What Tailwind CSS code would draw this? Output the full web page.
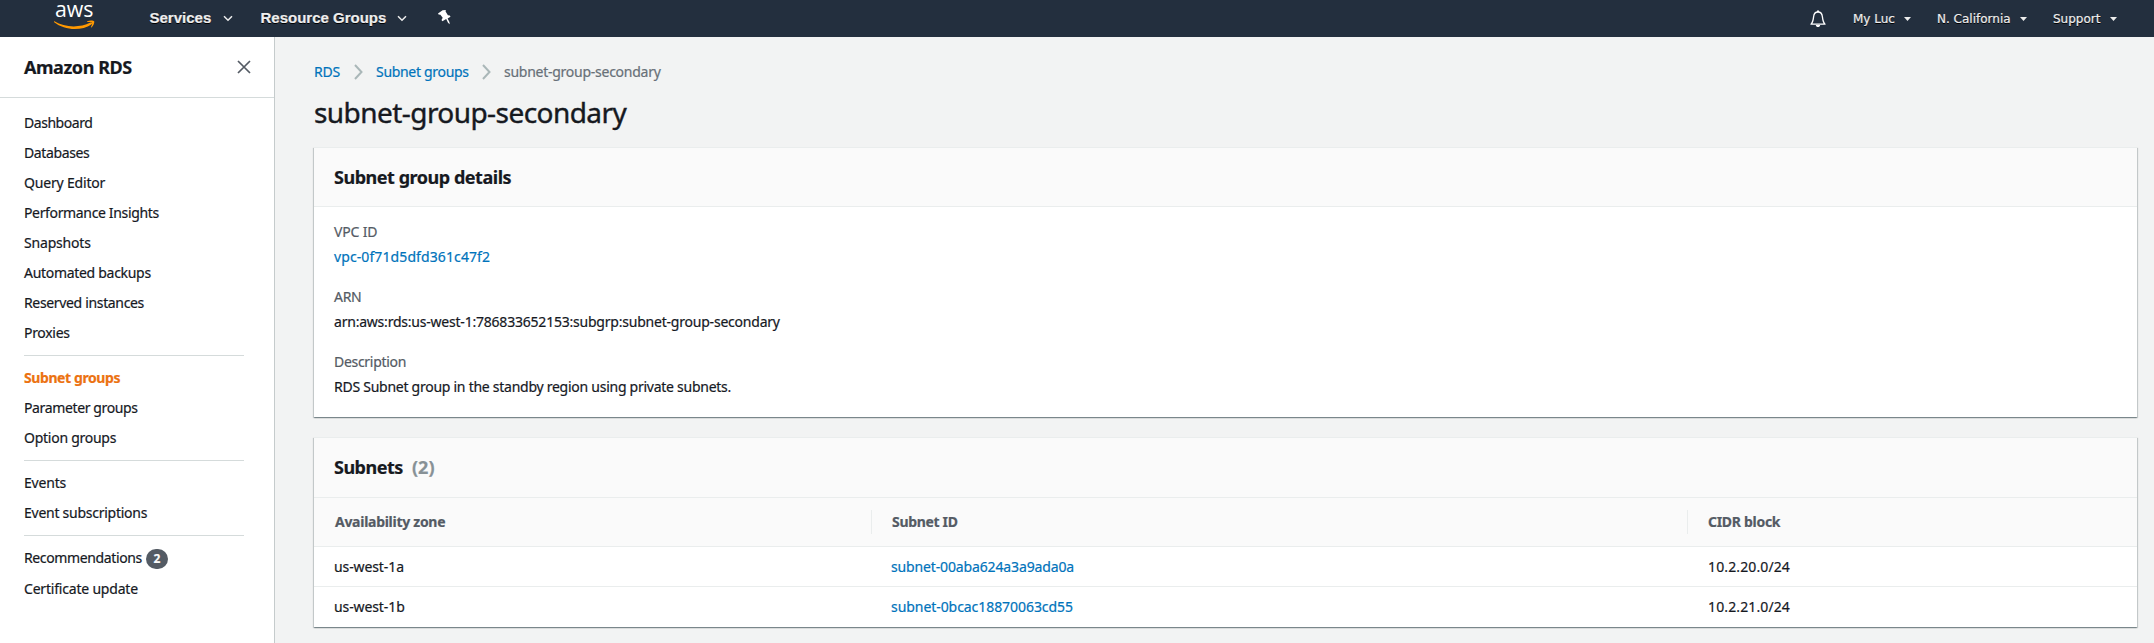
<!DOCTYPE html>
<html lang="en">
<head>
<meta charset="utf-8">
<title>Amazon RDS</title>
<script src="https://cdn.jsdelivr.net/npm/@tailwindcss/browser@4"></script>
</head>
<body class="flex h-[643px] w-[2154px] flex-col overflow-hidden bg-[#f2f3f3] font-['Noto_Sans',sans-serif] text-[14px] text-[#16191f] [-webkit-text-stroke:0.2px]">

<header class="flex h-[37px] shrink-0 items-center bg-[#232f3e] text-[#eeeeee]">
  <a class="ml-[54px] h-[37px] w-[42px]" aria-label="AWS">
    <svg class="block h-[37px] w-[42px]" viewBox="0 0 42 37">
      <text x="1" y="17" textLength="38.5" lengthAdjust="spacingAndGlyphs" font-family="Open Sans, sans-serif" font-size="21" font-weight="500" fill="#fff">aws</text>
      <path d="M.4 21.300c10.200 6.300 25 6.900 36 1.300 1.500-.6 2.400.8 1 1.800C27.500 31 10.500 30.500.2 22.200c-.5-.5-.2-1.100.2-.9z" fill="#ff9900"/>
      <path d="M33.200 21.200c2.400-1.200 6.400-1 7 .1.500 1.200-.8 4.600-2.700 6.100-.4.3-.7.100-.5-.4.500-1.200 1.500-3.600 1-4.300-.6-.8-3.200-.8-4.600-.8-.5 0-.6-.5-.2-.7z" fill="#ff9900"/>
    </svg>
  </a>
  <nav class="flex flex-1 items-center font-['Liberation_Sans',sans-serif] text-[15px] font-bold leading-[36px] [text-shadow:0_1px_0_#000]">
    <span class="-mt-px ml-[53.5px] w-[73px]">Services</span>
    <svg class="h-[7px] w-[10px]" viewBox="0 0 10 7"><path d="M1 1.200 5 5.200 9 1.200" fill="none" stroke="#eee" stroke-width="1.500"/></svg>
    <span class="-mt-px ml-[28px] w-[136.500px]">Resource Groups</span>
    <svg class="h-[7px] w-[10px]" viewBox="0 0 10 7"><path d="M1 1.200 5 5.200 9 1.200" fill="none" stroke="#eee" stroke-width="1.500"/></svg>
    <svg class="-mt-[3px] ml-[31px] h-[15px] w-[14px]" viewBox="0 0 14 15"><path d="M4.600.3 7.800 0 7.600 1.500l2.300 3.800 1.900.2.700 1.300-2.900 1.800 1.800 3.500.3 2.200-1.700-1.600-1.800-3.600-3.800 2.200-.9-1.200 1.200-2.300L2.400 4.700.6 4.600 0 3.400z" fill="#fff"/></svg>
  </nav>
  <div class="flex items-center pr-[37px] font-['DejaVu_Sans',sans-serif] text-[12px] leading-[37px] [text-shadow:0_1px_0_#000]">
    <svg class="mr-[27px] h-[18px] w-[16px]" viewBox="0 0 16 18"><path d="M1 14.200h14c-2-1.800-2.200-3.800-2.600-7.400C12.100 3.600 10.400 2 8 2S3.900 3.600 3.600 6.800C3.200 10.400 3 12.400 1 14.200z" fill="none" stroke="#fff" stroke-width="1.300" stroke-linejoin="round"/><path d="M7 .6h2V2H7zM5.800 15h4.400c-.2 1.500-1 2-2.200 2s-2-.5-2.200-2z" fill="#fff"/></svg>
    <span class="mt-px w-[51px]">My Luc</span>
    <svg class="h-[4px] w-[7px]" viewBox="0 0 7 4"><path d="M0 0h7L3.500 4z" fill="#eee"/></svg>
    <span class="mt-px ml-[26px] w-[83px]">N. California</span>
    <svg class="h-[4px] w-[7px]" viewBox="0 0 7 4"><path d="M0 0h7L3.500 4z" fill="#eee"/></svg>
    <span class="mt-px ml-[26px] w-[57px]">Support</span>
    <svg class="h-[4px] w-[7px]" viewBox="0 0 7 4"><path d="M0 0h7L3.500 4z" fill="#eee"/></svg>
  </div>
</header>

<div class="flex min-h-0 flex-1">
  <aside class="w-[275px] shrink-0 border-r border-[#c5cbcc] bg-white">
    <div class="flex h-[61px] items-center justify-between border-b border-[#d5dbdb] pl-6 pr-[23px]">
      <h2 class="text-[18px] font-bold leading-[60px] tracking-[-0.45px]">Amazon RDS</h2>
      <svg class="h-[14px] w-[14px]" viewBox="0 0 14 14"><path d="M1 1l12 12M13 1 1 13" stroke="#545b64" stroke-width="1.700"/></svg>
    </div>
    <nav class="mr-[30px] ml-6 pt-[10px] leading-[30px]">
      <div class="tracking-[-0.46px]">Dashboard</div>
      <div class="tracking-[-0.38px]">Databases</div>
      <div class="tracking-[-0.18px]">Query Editor</div>
      <div class="tracking-[-0.35px]">Performance Insights</div>
      <div class="tracking-[-0.18px]">Snapshots</div>
      <div class="tracking-[-0.3px]">Automated backups</div>
      <div class="tracking-[-0.34px]">Reserved instances</div>
      <div class="tracking-[-0.3px]">Proxies</div>
      <hr class="my-[7px] border-[#d5dbdb]">
      <div class="font-bold tracking-[-0.41px] text-[#ec7211]">Subnet groups</div>
      <div class="tracking-[-0.37px]">Parameter groups</div>
      <div class="tracking-[-0.26px]">Option groups</div>
      <hr class="my-[7px] border-[#d5dbdb]">
      <div class="tracking-[-0.2px]">Events</div>
      <div class="tracking-[-0.26px]">Event subscriptions</div>
      <hr class="my-[7px] border-[#d5dbdb]">
      <div class="flex h-[31px] items-start"><span class="w-[122px] tracking-[-0.37px]">Recommendations</span><span class="mt-[6px] flex h-5 w-[22px] items-center justify-center rounded-[10px] bg-[#545b64] text-[12px] font-bold leading-5 text-[#fafafa]">2</span></div>
      <div class="tracking-[-0.2px]">Certificate update</div>
    </nav>
  </aside>

  <main class="flex-1 pr-[17px] pl-[39px]">
    <div class="mt-[24px] flex h-[22px] items-center leading-[22px] text-[#0073bb]">
      <span class="w-[40px] tracking-[-0.2px]">RDS</span>
      <svg class="h-4 w-[9px]" viewBox="0 0 9 16"><path d="M1 1l6.500 7L1 15" fill="none" stroke="#aab7b8" stroke-width="2"/></svg>
      <span class="ml-[13px] w-[106px] tracking-[-0.31px]">Subnet groups</span>
      <svg class="h-4 w-[9px]" viewBox="0 0 9 16"><path d="M1 1l6.500 7L1 15" fill="none" stroke="#aab7b8" stroke-width="2"/></svg>
      <span class="ml-[13px] tracking-[-0.26px] text-[#687078]">subnet-group-secondary</span>
    </div>
    <h1 class="mt-[11px] h-[36px] text-[28px] leading-[36px] tracking-[-0.56px] [-webkit-text-stroke:0.4px]">subnet-group-secondary</h1>

    <section class="mt-[17px] h-[270px] border-t border-[#eaeded] bg-white shadow-[0_1px_1px_0_rgba(0,28,36,0.3),1px_1px_1px_0_rgba(0,28,36,0.15),-1px_1px_1px_0_rgba(0,28,36,0.15)]">
      <h2 class="h-[59px] border-b border-[#eaeded] bg-[#fafafa] pl-5 text-[18px] font-bold leading-[58px] tracking-[-0.47px]">Subnet group details</h2>
      <dl class="flex flex-col gap-[15px] pt-[12px] pl-5 leading-[25px]">
        <div><dt class="tracking-[-0.15px] text-[#545b64]">VPC ID</dt><dd class="tracking-[0.1px] text-[#0073bb]">vpc-0f71d5dfd361c47f2</dd></div>
        <div><dt class="tracking-[-0.3px] text-[#545b64]">ARN</dt><dd class="tracking-[-0.215px]">arn:aws:rds:us-west-1:786833652153:subgrp:subnet-group-secondary</dd></div>
        <div><dt class="tracking-[-0.3px] text-[#545b64]">Description</dt><dd class="tracking-[-0.26px]">RDS Subnet group in the standby region using private subnets.</dd></div>
      </dl>
    </section>

    <section class="mt-5 border-t border-[#eaeded] bg-white shadow-[0_1px_1px_0_rgba(0,28,36,0.3),1px_1px_1px_0_rgba(0,28,36,0.15),-1px_1px_1px_0_rgba(0,28,36,0.15)]">
      <h2 class="flex h-[60px] border-b border-[#eaeded] bg-[#fafafa] pl-5 text-[18px] font-bold leading-[58px]"><span class="w-[78px] tracking-[-0.5px]">Subnets</span><span class="text-[#879196]">(2)</span></h2>
      <div class="grid h-[49px] grid-cols-[557px_816px_1fr] items-center border-b border-[#eaeded] bg-[#fafafa] font-bold leading-6 text-[#545b64]">
        <div class="pl-[21px] tracking-[-0.28px]">Availability zone</div>
        <div class="border-l border-[#eaeded] pl-5 tracking-[-0.33px]">Subnet ID</div>
        <div class="border-l border-[#eaeded] pl-5 tracking-[-0.3px]">CIDR block</div>
      </div>
      <div class="grid h-[40px] grid-cols-[557px_817px_1fr] border-b border-[#eaeded] leading-[39px]">
        <div class="pl-5 tracking-[-0.1px]">us-west-1a</div>
        <div class="pl-5 tracking-[-0.14px] text-[#0073bb]">subnet-00aba624a3a9ada0a</div>
        <div class="pl-5 tracking-[0.12px]">10.2.20.0/24</div>
      </div>
      <div class="grid h-[40px] grid-cols-[557px_817px_1fr] leading-[39px]">
        <div class="pl-5 tracking-[-0.1px]">us-west-1b</div>
        <div class="pl-5 tracking-[-0.06px] text-[#0073bb]">subnet-0bcac18870063cd55</div>
        <div class="pl-5 tracking-[0.12px]">10.2.21.0/24</div>
      </div>
    </section>
  </main>
</div>
</body>
</html>
